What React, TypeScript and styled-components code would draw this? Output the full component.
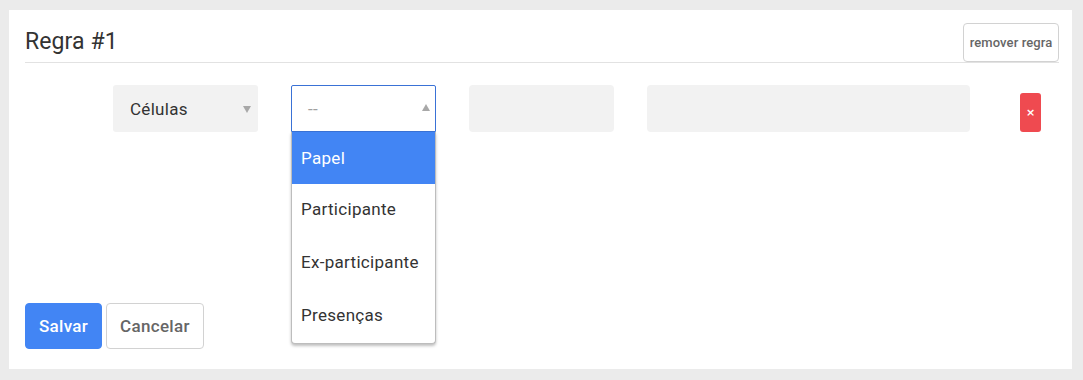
import React from "react";
import styled, { createGlobalStyle } from "styled-components";

const Global = createGlobalStyle`
  html, body { margin: 0; padding: 0; background: #ebebeb; }
  body { font-family: Roboto, "Liberation Sans", sans-serif; color: #333; }
  #root { padding: 10px 11px 11px 9px; }
`;

const Panel = styled.div`
  background: #fff;
  height: 359px;
  box-sizing: border-box;
  padding: 13px 13px 20px 16px;
  display: flex;
  flex-direction: column;
`;

const Header = styled.div`
  display: flex;
  align-items: center;
  justify-content: space-between;
  border-bottom: 1px solid #e2e2e2;
  height: 39px;
`;

const Title = styled.h2`
  margin: 0;
  font-size: 23px;
  font-weight: 400;
  color: #333;
  line-height: 1;
  padding-bottom: 3px;
  letter-spacing: 0.1px;
`;

const SmallButton = styled.button`
  height: 39px;
  width: 96px;
  padding: 0;
  border: 1px solid #d2d2d2;
  border-radius: 4px;
  background: #fff;
  color: #666;
  font-family: Roboto, sans-serif;
  font-size: 13px;
  font-weight: 500;
  letter-spacing: 0.1px;
`;

const Row = styled.div`
  display: flex;
  align-items: flex-start;
  padding-left: 88px;
  margin-top: 22px;
  height: 47px;
`;

const Field = styled.div<{ $w: number; $gap?: number }>`
  position: relative;
  width: ${(p) => p.$w}px;
  margin-right: ${(p) => p.$gap ?? 33}px;
  height: 47px;
  flex: none;
`;

const SelectBox = styled.div<{ $open?: boolean }>`
  box-sizing: border-box;
  height: 47px;
  border-radius: ${(p) => (p.$open ? "2px 2px 0 0" : "3px")};
  background: ${(p) => (p.$open ? "#fff" : "#f2f2f2")};
  border: ${(p) => (p.$open ? "1px solid #3a72d6" : "none")};
  display: flex;
  align-items: center;
  justify-content: space-between;
  padding: 0 ${(p) => (p.$open ? "5px" : "7px")} 0 ${(p) => (p.$open ? "16px" : "17px")};
`;

const SelectText = styled.span<{ $placeholder?: boolean }>`
  font-size: 17px;
  letter-spacing: 0.3px;
  color: ${(p) => (p.$placeholder ? "#a0a0a0" : "#333")};
`;

const Arrow = styled.span<{ $up?: boolean }>`
  width: 0;
  height: 0;
  border-left: 4px solid transparent;
  border-right: 4px solid transparent;
  ${(p) =>
    p.$up
      ? "border-bottom: 7px solid #a8a8a8; margin-bottom: 2px;"
      : "border-top: 7px solid #a8a8a8; margin-top: 2px;"}
`;

const Menu = styled.ul`
  position: absolute;
  top: 47px;
  left: 0;
  right: 0;
  margin: 0;
  padding: 0;
  list-style: none;
  background: #fff;
  border: 1px solid #bdbdbd;
  border-top: none;
  border-radius: 0 0 4px 4px;
  box-shadow: 0 2px 3px rgba(0, 0, 0, 0.25);
  z-index: 2;
`;

const MenuItem = styled.li<{ $active?: boolean }>`
  box-sizing: border-box;
  height: ${(p) => (p.$active ? 52 : 53)}px;
  display: flex;
  align-items: center;
  padding: 0 0 ${(p) => (p.$active ? 1 : 3)}px 9px;
  font-size: 17px;
  letter-spacing: 0.3px;
  background: ${(p) => (p.$active ? "#4285f4" : "transparent")};
  color: ${(p) => (p.$active ? "#fff" : "#333")};
`;

const Input = styled.div`
  height: 47px;
  border-radius: 4px;
  background: #f2f2f2;
`;

const DeleteButton = styled.button`
  margin-top: 8px;
  width: 21px;
  height: 39px;
  border: none;
  border-radius: 3px;
  background: #ef4a50;
  color: #fff;
  font-size: 11px;
  font-weight: 700;
  padding: 0;
  font-family: "DejaVu Sans", sans-serif;
  line-height: 1;
`;

const Footer = styled.div`
  margin-top: auto;
  display: flex;
  gap: 4px;
`;

const Button = styled.button<{ $primary?: boolean }>`
  height: 46px;
  padding: 0 13px;
  border-radius: 4px;
  border: 1px solid ${(p) => (p.$primary ? "#4285f4" : "#d2d2d2")};
  background: ${(p) => (p.$primary ? "#4285f4" : "#fff")};
  color: ${(p) => (p.$primary ? "#fff" : "#666")};
  font-family: Roboto, sans-serif;
  font-size: 17px;
  font-weight: 500;
  letter-spacing: 0.3px;
`;

export default function App() {
  return (
    <>
      <Global />
      <Panel>
        <Header>
          <Title>Regra #1</Title>
          <SmallButton>remover regra</SmallButton>
        </Header>
        <Row>
          <Field $w={145}>
            <SelectBox>
              <SelectText>Células</SelectText>
              <Arrow />
            </SelectBox>
          </Field>
          <Field $w={145}>
            <SelectBox $open>
              <SelectText $placeholder>--</SelectText>
              <Arrow $up />
            </SelectBox>
            <Menu>
              <MenuItem $active>Papel</MenuItem>
              <MenuItem>Participante</MenuItem>
              <MenuItem>Ex-participante</MenuItem>
              <MenuItem>Presenças</MenuItem>
            </Menu>
          </Field>
          <Field $w={145}>
            <Input />
          </Field>
          <Field $w={323} $gap={50}>
            <Input />
          </Field>
          <DeleteButton>×</DeleteButton>
        </Row>
        <Footer>
          <Button $primary>Salvar</Button>
          <Button>Cancelar</Button>
        </Footer>
      </Panel>
    </>
  );
}
